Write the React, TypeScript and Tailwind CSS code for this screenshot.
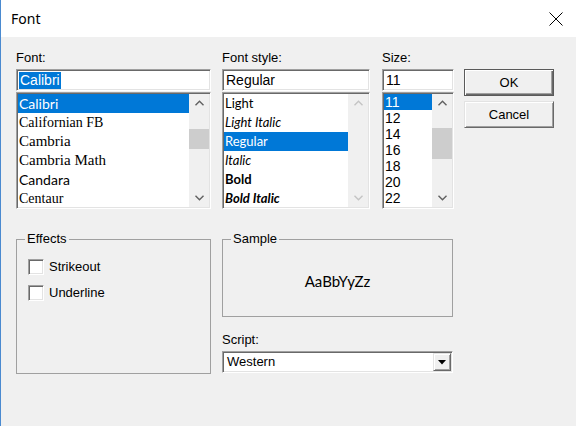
import React from 'react';

const ui = "font-['Liberation_Sans',Arial,sans-serif]";
const sunken =
  'border border-t-[#a0a0a0] border-l-[#a0a0a0] border-r-white border-b-white shadow-[inset_1px_1px_0_#696969,inset_-1px_-1px_0_#e3e3e3] p-px';
const raised =
  'border border-t-[#e3e3e3] border-l-[#e3e3e3] border-r-[#696969] border-b-[#696969] shadow-[inset_1px_1px_0_#ffffff,inset_-1px_-1px_0_#a0a0a0]';

function Chevron({ dir, disabled }: { dir: 'up' | 'down'; disabled?: boolean }) {
  return (
    <svg width="9" height="6" viewBox="0 0 9 6">
      <polyline
        points={dir === 'up' ? '0.5,5.2 4.5,1.2 8.5,5.2' : '0.5,0.8 4.5,4.8 8.5,0.8'}
        fill="none"
        stroke={disabled ? '#c4c4c4' : '#606060'}
        strokeWidth="1.4"
      />
    </svg>
  );
}

function ScrollBar({ thumb, disabled }: { thumb?: string; disabled?: boolean }) {
  return (
    <div className="w-[20px] bg-[#f0f0f0] flex flex-col">
      <div className="h-[18px] flex items-center justify-center">
        <Chevron dir="up" disabled={disabled} />
      </div>
      <div className="flex-1">{thumb && <div className={`bg-[#cdcdcd] ${thumb}`} />}</div>
      <div className="h-[18px] flex items-center justify-center">
        <Chevron dir="down" disabled={disabled} />
      </div>
    </div>
  );
}

type Item = { label: string; cls: string };

function ListBox({
  items,
  selected,
  row,
  thumb,
  disabled,
}: {
  items: Item[];
  selected: number;
  row: string;
  thumb?: string;
  disabled?: boolean;
}) {
  return (
    <div className={`mt-px h-[117px] flex bg-white ${sunken}`}>
      <div className="flex-1 overflow-hidden">
        {items.map((it, i) => (
          <div
            key={it.label}
            className={`${row} pl-[1px] whitespace-nowrap ${it.cls} ${
              i === selected ? 'bg-[#0078d7] text-white' : 'text-black'
            }`}
          >
            {it.label}
          </div>
        ))}
      </div>
      <ScrollBar thumb={thumb} disabled={disabled} />
    </div>
  );
}

function TextBox({ value, highlight }: { value: string; highlight?: boolean }) {
  return (
    <div className={`mt-[3px] h-[22px] bg-white flex items-center ${sunken}`}>
      <span
        className={`ml-px px-px leading-[17px] text-[14px] ${ui} ${
          highlight ? 'bg-[#0078d7] text-white' : 'text-black'
        }`}
      >
        {value}
      </span>
    </div>
  );
}

function Label({ children }: { children: React.ReactNode }) {
  return <div className={`h-[16px] leading-[16px] text-[13px] text-black ${ui}`}>{children}</div>;
}

function CheckRow({ label }: { label: string }) {
  return (
    <div className="flex items-center h-[16px] gap-[5px]">
      <div className={`w-[16px] h-[16px] bg-white ${sunken}`} />
      <span className={`text-[13px] text-black ${ui}`}>{label}</span>
    </div>
  );
}

const lato = "font-['Lato','Noto_Sans',sans-serif]";
const serif = "font-['Liberation_Serif','Times_New_Roman',serif]";

const fonts: Item[] = [
  { label: 'Calibri', cls: `${lato} text-[14px]` },
  { label: 'Californian FB', cls: `${serif} text-[14px]` },
  { label: 'Cambria', cls: `${serif} text-[15px]` },
  { label: 'Cambria Math', cls: `${serif} text-[15px]` },
  { label: 'Candara', cls: `${lato} text-[14px]` },
  { label: 'Centaur', cls: `${serif} text-[14px]` },
];

const styles: Item[] = [
  { label: 'Light', cls: `${lato} text-[13px]` },
  { label: 'Light Italic', cls: `${lato} text-[13px] italic` },
  { label: 'Regular', cls: `${lato} text-[13px]` },
  { label: 'Italic', cls: `${lato} text-[13px] italic` },
  { label: 'Bold', cls: `${lato} text-[13px] font-bold` },
  { label: 'Bold Italic', cls: `${lato} text-[13px] font-bold italic` },
];

const sizes: Item[] = ['11', '12', '14', '16', '18', '20', '22'].map((s) => ({
  label: s,
  cls: `${ui} text-[14px]`,
}));

export default function App() {
  return (
    <div className="w-[576px] h-[426px] flex flex-col bg-[#f0f0f0] border-l border-[#4a8ad0] overflow-hidden">
      <div className="h-[37px] bg-white flex items-center justify-between pl-[10px] pr-[13px]">
        <span className="text-[14px] text-black font-['Noto_Sans','Open_Sans',sans-serif]">Font</span>
        <svg width="14" height="14" viewBox="0 0 14 14">
          <path d="M0.5 0.5 L13.5 13.5 M13.5 0.5 L0.5 13.5" stroke="#000" strokeWidth="1" />
        </svg>
      </div>

      <div className="flex-1 pl-[15px] pt-[13px]">
        <div className="flex">
          <div className="w-[195px]">
            <Label>Font:</Label>
            <TextBox value="Calibri" highlight />
            <ListBox items={fonts} selected={0} row="h-[19px] leading-[19px]" thumb="mt-[17px] h-[20px]" />
          </div>
          <div className="w-[148px] ml-[11px]">
            <Label>Font style:</Label>
            <TextBox value="Regular" />
            <ListBox items={styles} selected={2} row="h-[19px] leading-[19px]" disabled />
          </div>
          <div className="w-[72px] ml-[12px]">
            <Label>Size:</Label>
            <TextBox value="11" />
            <ListBox items={sizes} selected={0} row="h-[16px] leading-[16px]" thumb="mt-[16px] h-[31px]" />
          </div>
          <div className="w-[90px] ml-[10px] pt-[19px] flex flex-col gap-[5px]">
            <button
              className={`h-[27px] border border-[#5a5a5a] bg-[#f0f0f0] shadow-[inset_1px_1px_0_#ffffff,inset_-1px_-1px_0_#696969,inset_-2px_-2px_0_#a0a0a0] text-[13px] text-black ${ui}`}
            >
              OK
            </button>
            <button className={`h-[27px] bg-[#f0f0f0] text-[13px] text-black ${raised} ${ui}`}>Cancel</button>
          </div>
        </div>

        <div className="flex mt-[22px]">
          <fieldset className="w-[195px] h-[143px] border border-[#a0a0a0]">
            <legend className={`ml-[8px] px-[2px] h-[16px] leading-[16px] text-[13px] text-black ${ui}`}>
              Effects
            </legend>
            <div className="pl-[11px] mt-[12px] flex flex-col gap-[10px]">
              <CheckRow label="Strikeout" />
              <CheckRow label="Underline" />
            </div>
          </fieldset>

          <div className="w-[231px] ml-[11px]">
            <fieldset className="h-[86px] border border-[#a0a0a0]">
              <legend className={`ml-[8px] px-[2px] h-[16px] leading-[16px] text-[13px] text-black ${ui}`}>
                Sample
              </legend>
              <div className={`h-[66px] pt-[3px] flex items-center justify-center text-[15px] text-black ${lato}`}>
                AaBbYyZz
              </div>
            </fieldset>
            <div className="mt-[15px]">
              <Label>Script:</Label>
            </div>
            <div className={`mt-[3px] h-[22px] bg-white flex items-center justify-between ${sunken}`}>
              <span className={`pl-[3px] text-[13px] text-black ${ui}`}>Western</span>
              <div className={`w-[18px] h-[18px] bg-[#f0f0f0] flex items-center justify-center ${raised}`}>
                <svg width="8" height="5" viewBox="0 0 8 5">
                  <path d="M0 0 H8 L4 4.5 Z" fill="#000" />
                </svg>
              </div>
            </div>
          </div>
        </div>
      </div>
    </div>
  );
}
